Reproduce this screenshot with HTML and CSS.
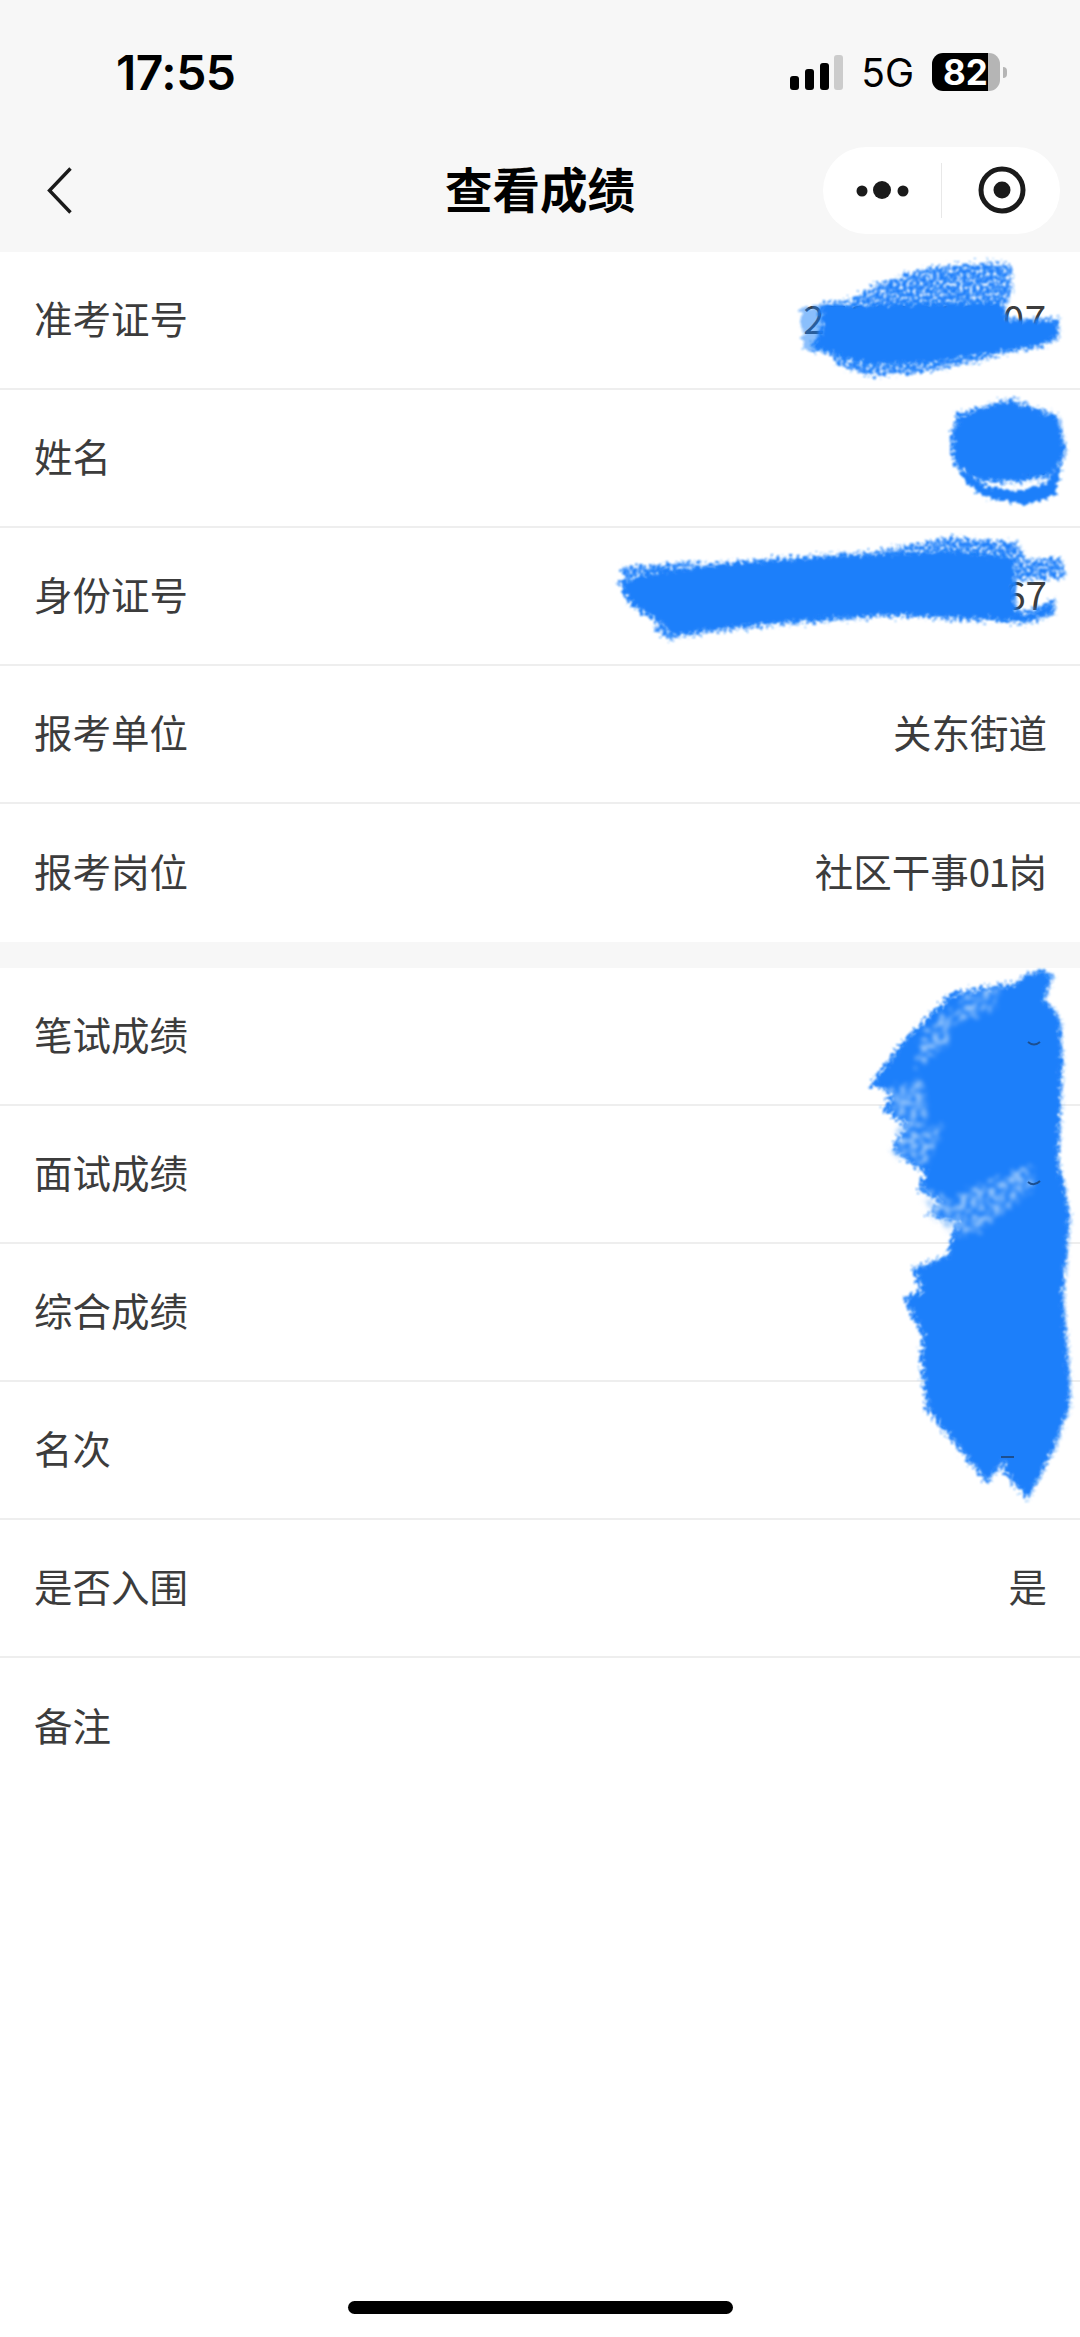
FILE: index.html
```html
<!DOCTYPE html>
<html lang="zh-CN">
<head>
  <meta charset="UTF-8" />
  <title>查看成绩</title>
  <link rel="stylesheet" href="styles.css">
</head>
<body>
  <div class="page">
    <header class="top">
      <div class="status">
        <span class="time">17:55</span>
        <div class="status-right">
          <svg class="signal" width="53" height="35" viewBox="0 0 53 35">
            <rect x="0" y="21" width="9" height="14" rx="3" fill="#000"/>
            <rect x="15" y="14" width="9" height="21" rx="3" fill="#000"/>
            <rect x="30" y="8" width="9" height="27" rx="3" fill="#000"/>
            <rect x="44" y="0" width="9" height="35" rx="3" fill="#ccc"/>
          </svg>
          <span class="net">5G</span>
          <div class="battery">
            <div class="battery-body"><span class="battery-num">82</span></div>
            <span class="battery-nub"></span>
          </div>
        </div>
      </div>
      <nav class="nav">
        <svg class="back" width="26" height="47" viewBox="0 0 26 47">
          <path d="M23.5 1.5 L2.5 23.5 L23.5 45.5" fill="none" stroke="#1a1a1a" stroke-width="3.4"/>
        </svg>
        <h1 class="title">查看成绩</h1>
        <div class="capsule">
          <svg class="capsule-icon" width="118" height="87" viewBox="0 0 118 87">
            <circle cx="39" cy="44" r="5.5" fill="#1a1a1a"/>
            <circle cx="59" cy="43" r="9" fill="#1a1a1a"/>
            <circle cx="80" cy="44" r="5.5" fill="#1a1a1a"/>
          </svg>
          <span class="capsule-line"></span>
          <svg class="capsule-icon" width="118" height="87" viewBox="0 0 118 87">
            <circle cx="60" cy="43" r="21" fill="none" stroke="#1a1a1a" stroke-width="5"/>
            <circle cx="60" cy="43" r="8.5" fill="#1a1a1a"/>
          </svg>
        </div>
      </nav>
    </header>

    <main>
      <section class="group">
        <div class="row"><span>准考证号</span><span class="num">27000000007</span></div>
        <div class="row"><span>姓名</span><span>某某</span></div>
        <div class="row"><span>身份证号</span><span>100000000000000067</span></div>
        <div class="row"><span>报考单位</span><span>关东街道</span></div>
        <div class="row"><span>报考岗位</span><span>社区干事<span class="tight">01</span>岗</span></div>
      </section>
      <section class="group">
        <div class="row"><span>笔试成绩</span><span>00.00</span></div>
        <div class="row"><span>面试成绩</span><span>00.00</span></div>
        <div class="row"><span>综合成绩</span><span>00.00</span></div>
        <div class="row"><span>名次</span><span>00</span></div>
        <div class="row"><span>是否入围</span><span>是</span></div>
        <div class="row"><span>备注</span><span></span></div>
      </section>
    </main>

    <div class="home-bar"></div>

    <!-- blue pen marks drawn over the private values -->
    <svg class="scribbles" width="1080" height="2337" viewBox="0 0 1080 2337">
      <defs>
        <filter id="fuzz" filterUnits="userSpaceOnUse" x="0" y="0" width="1080" height="2337">
          <feTurbulence type="fractalNoise" baseFrequency="0.22" numOctaves="2" seed="4" result="n"/>
          <feDisplacementMap in="SourceGraphic" in2="n" scale="11" xChannelSelector="R" yChannelSelector="G"/>
          <feGaussianBlur stdDeviation="1"/>
        </filter>
        <filter id="stipple" filterUnits="userSpaceOnUse" x="0" y="0" width="1080" height="2337">
          <feTurbulence type="fractalNoise" baseFrequency="0.3" numOctaves="2" seed="9" result="n"/>
          <feDisplacementMap in="SourceGraphic" in2="n" scale="16" xChannelSelector="R" yChannelSelector="G" result="d"/>
          <feColorMatrix in="n" type="matrix" values="0 0 0 0 0  0 0 0 0 0  0 0 0 0 0  3.6 0 0 0 -0.95" result="m"/>
          <feComposite in="d" in2="m" operator="in"/>
          <feGaussianBlur stdDeviation="1"/>
        </filter>
        <filter id="patch" filterUnits="userSpaceOnUse" x="0" y="0" width="1080" height="2337">
          <feTurbulence type="fractalNoise" baseFrequency="0.18" numOctaves="3" seed="2" result="n"/>
          <feDisplacementMap in="SourceGraphic" in2="n" scale="22" xChannelSelector="R" yChannelSelector="G" result="d"/>
          <feColorMatrix in="n" type="matrix" values="0 0 0 0 0  0 0 0 0 0  0 0 0 0 0  5 0 0 0 -2.1" result="m"/>
          <feComposite in="d" in2="m" operator="in"/>
          <feGaussianBlur stdDeviation="2"/>
        </filter>
        <polygon id="body" points="1040,973 1050,977 1042,1000 1058,1019 1060,1060 1058,1127 1056,1160 1068,1217 1066,1230 1061,1297 1066,1357 1068,1403 1052,1448 1028,1494 1006,1470 1008,1462 1000,1462 987,1478 965,1452 930,1408 923,1357 926,1337 908,1300 925,1292 916,1270 950,1258 955,1235 962,1220 933,1215 943,1200 921,1188 930,1173 896,1150 910,1123 888,1110 895,1093 875,1083 909,1039 955,995 1017,986 1027,977"/>
        <polygon id="idband" points="622,584 660,572 743,564 837,557 953,552 1012,558 1014,612 1027,616 1052,604 1052,612 1027,620 893,613 760,623 672,634 658,618 634,604"/>
        <polygon id="ticket" points="824,306 1000,303 1006,322 1056,322 1056,336 1040,344 977,354 927,362 870,364 837,354 815,346 824,330"/>
        <polygon id="name" points="960,416 1010,402 1056,418 1064,450 1052,474 1010,480 975,478 956,462 954,438"/>
      </defs>

      <polygon class="pen-tint" filter="url(#fuzz)" points="800,308 824,306 824,352 804,350"/>

      <g class="pen-light" filter="url(#stipple)">
        <polygon points="1012,265 990,262 927,268 880,283 847,302 840,312 1000,312 1012,295"/>
        <polygon points="830,350 1050,340 977,362 927,372 870,376 837,365"/>
        <polygon points="830,560 953,537 1017,542 1027,560 1060,557 1068,577 1030,580 830,575"/>
        <polygon points="620,567 700,562 700,590 630,590"/>
        <polygon points="660,620 720,620 670,640 653,628"/>
        <use href="#body" class="pen-halo"/>
        <use href="#idband" class="pen-halo"/>
        <use href="#ticket" class="pen-halo"/>
        <use href="#name" class="pen-halo"/>
      </g>

      <g class="pen" filter="url(#fuzz)">
        <use href="#ticket"/>
        <use href="#name"/>
        <polygon points="958,468 985,486 1015,491 1045,484 1062,460 1056,495 1027,505 987,498 965,482"/>
        <use href="#idband"/>
        <use href="#body"/>
      </g>

      <g class="pen-gap" filter="url(#patch)">
        <polygon points="965,995 1005,985 995,1010 955,1025"/>
        <polygon points="920,1040 955,1005 950,1045 915,1070"/>
        <polygon points="890,1090 925,1080 930,1120 900,1125"/>
        <polygon points="900,1125 945,1125 930,1165 895,1155"/>
        <polygon points="965,1190 1035,1165 1035,1190 975,1235 945,1230"/>
        <polygon points="925,1190 965,1205 950,1230 930,1210"/>
      </g>

      <g class="pen-trace">
        <path d="M1028 1042 q6 5 12 0"/>
        <path d="M1028 1182 q6 5 12 -1"/>
        <path d="M1001 1457 h13"/>
      </g>
    </svg>
  </div>
</body>
</html>
```

FILE: styles.css
```css
html, body { margin: 0; padding: 0; background: #fff; }
body { font-family: "Noto Sans CJK SC", "Noto Sans", sans-serif; }

.page { position: relative; width: 1080px; height: 2337px; overflow: hidden; display: flex; flex-direction: column; background: #fff; }

.top { background: #f7f7f7; height: 252px; }
.status { height: 144px; display: flex; align-items: center; justify-content: space-between; padding: 0 73px 0 116px; box-sizing: border-box; }
.time { font-family: Inter, "Liberation Sans", sans-serif; font-size: 48px; font-weight: 600; color: #000; letter-spacing: -0.5px; }
.status-right { display: flex; align-items: center; }
.signal { display: block; margin-right: 18px; }
.net { font-family: Inter, "Liberation Sans", sans-serif; font-size: 39px; color: #000; margin-right: 18px; }
.battery { display: flex; align-items: center; }
.battery-body { width: 68px; height: 38px; border-radius: 11px; box-sizing: border-box; background: linear-gradient(90deg, #000 82%, #b5b5b5 82%); color: #fff; display: flex; align-items: center; padding-left: 11px; }
.battery-num { font-family: Inter, "Liberation Sans", sans-serif; font-size: 35px; font-weight: 700; line-height: 38px; }
.battery-nub { width: 4px; height: 11px; margin-left: 3px; background: #b5b5b5; border-radius: 0 4px 4px 0; }

.nav { display: grid; grid-template-columns: 1fr auto 1fr; align-items: center; height: 87px; margin-top: 3px; padding-right: 20px; padding-left: 47px; }
.back { display: block; }
.title { margin: 0 27px 6px 0; font-size: 47.5px; line-height: 60px; font-weight: 700; color: #000; }
.capsule { justify-self: end; display: flex; align-items: center; width: 237px; height: 87px; background: #fff; border-radius: 44px; }
.capsule-icon { display: block; flex: none; }
.capsule-line { width: 1px; height: 55px; background: #e8e8e8; flex: none; }

main { background: #f7f7f7; }
.group { background: #fff; }
.group + .group { margin-top: 26px; }
.row { height: 138px; box-sizing: border-box; display: flex; align-items: center; justify-content: space-between; padding: 0 33px 6px 34px; border-bottom: 2px solid #eee; font-size: 38.5px; color: #3c3c3c; }
.group .row:last-child { border-bottom: none; }
.num { letter-spacing: 0.8px; }
.tight { letter-spacing: -1.5px; }

.home-bar { width: 385px; height: 13px; margin: auto auto 23px; border-radius: 7px; background: #000; }

.scribbles { position: absolute; left: 0; top: 0; }
.pen { fill: #1a7ffa; }
.pen-light { fill: #1a7ffa; }
.pen-halo { stroke: #1a7ffa; stroke-width: 7; }
.pen-tint { fill: #1a7ffa; fill-opacity: 0.5; }
.pen-gap { fill: #9cc9fb; }
.pen-trace { fill: none; stroke: #1c4f90; stroke-width: 2; }
```
